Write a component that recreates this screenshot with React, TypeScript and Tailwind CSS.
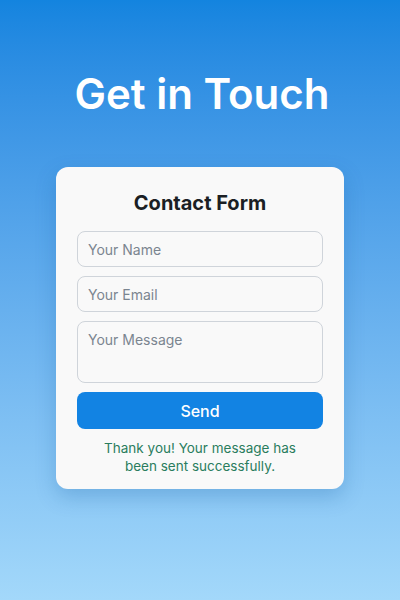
export default function App() {
  return (
    <div
      className="min-h-[600px] w-full flex flex-col items-center bg-gradient-to-b from-[#1384df] to-[#a3d8fa] pt-[66px]"
      style={{ fontFamily: "Inter, 'Noto Sans', sans-serif" }}
    >
      <h1 className="text-[42px] leading-[56px] font-semibold text-white pl-[4px]">
        Get in Touch
      </h1>

      {/* Card */}
      <div className="mt-[45px] w-[288px] bg-[#f9f9f9] rounded-xl shadow-[0_8px_20px_rgba(20,90,160,0.25)] px-[21px] pt-[21px] pb-[14px] flex flex-col">
        <h2 className="text-center text-[20px] leading-[30px] font-bold text-[#1b1f24]">
          Contact Form
        </h2>

        <div className="mt-[13px] flex flex-col gap-[9px]">
          <input
            type="text"
            placeholder="Your Name"
            className="h-[36px] w-full rounded-lg border border-[#cfd4da] bg-[#f9f9f9] px-[10px] text-[14px] text-[#333] placeholder:text-[#7b8590] focus:outline-none"
          />
          <input
            type="email"
            placeholder="Your Email"
            className="h-[36px] w-full rounded-lg border border-[#cfd4da] bg-[#f9f9f9] px-[10px] text-[14px] text-[#333] placeholder:text-[#7b8590] focus:outline-none"
          />
          <textarea
            placeholder="Your Message"
            className="h-[62px] w-full resize-none rounded-lg border border-[#cfd4da] bg-[#f9f9f9] px-[10px] py-[8px] text-[14px] leading-[20px] text-[#333] placeholder:text-[#7b8590] focus:outline-none"
          />
          <button className="h-[37px] w-full rounded-lg bg-[#1283e3] text-white text-[16px] font-medium">
            Send
          </button>
        </div>

        <p className="mt-[10px] text-center text-[13.5px] leading-[18px] text-[#2a7d5e] px-5">
          Thank you! Your message has been sent successfully.
        </p>
      </div>
    </div>
  );
}
